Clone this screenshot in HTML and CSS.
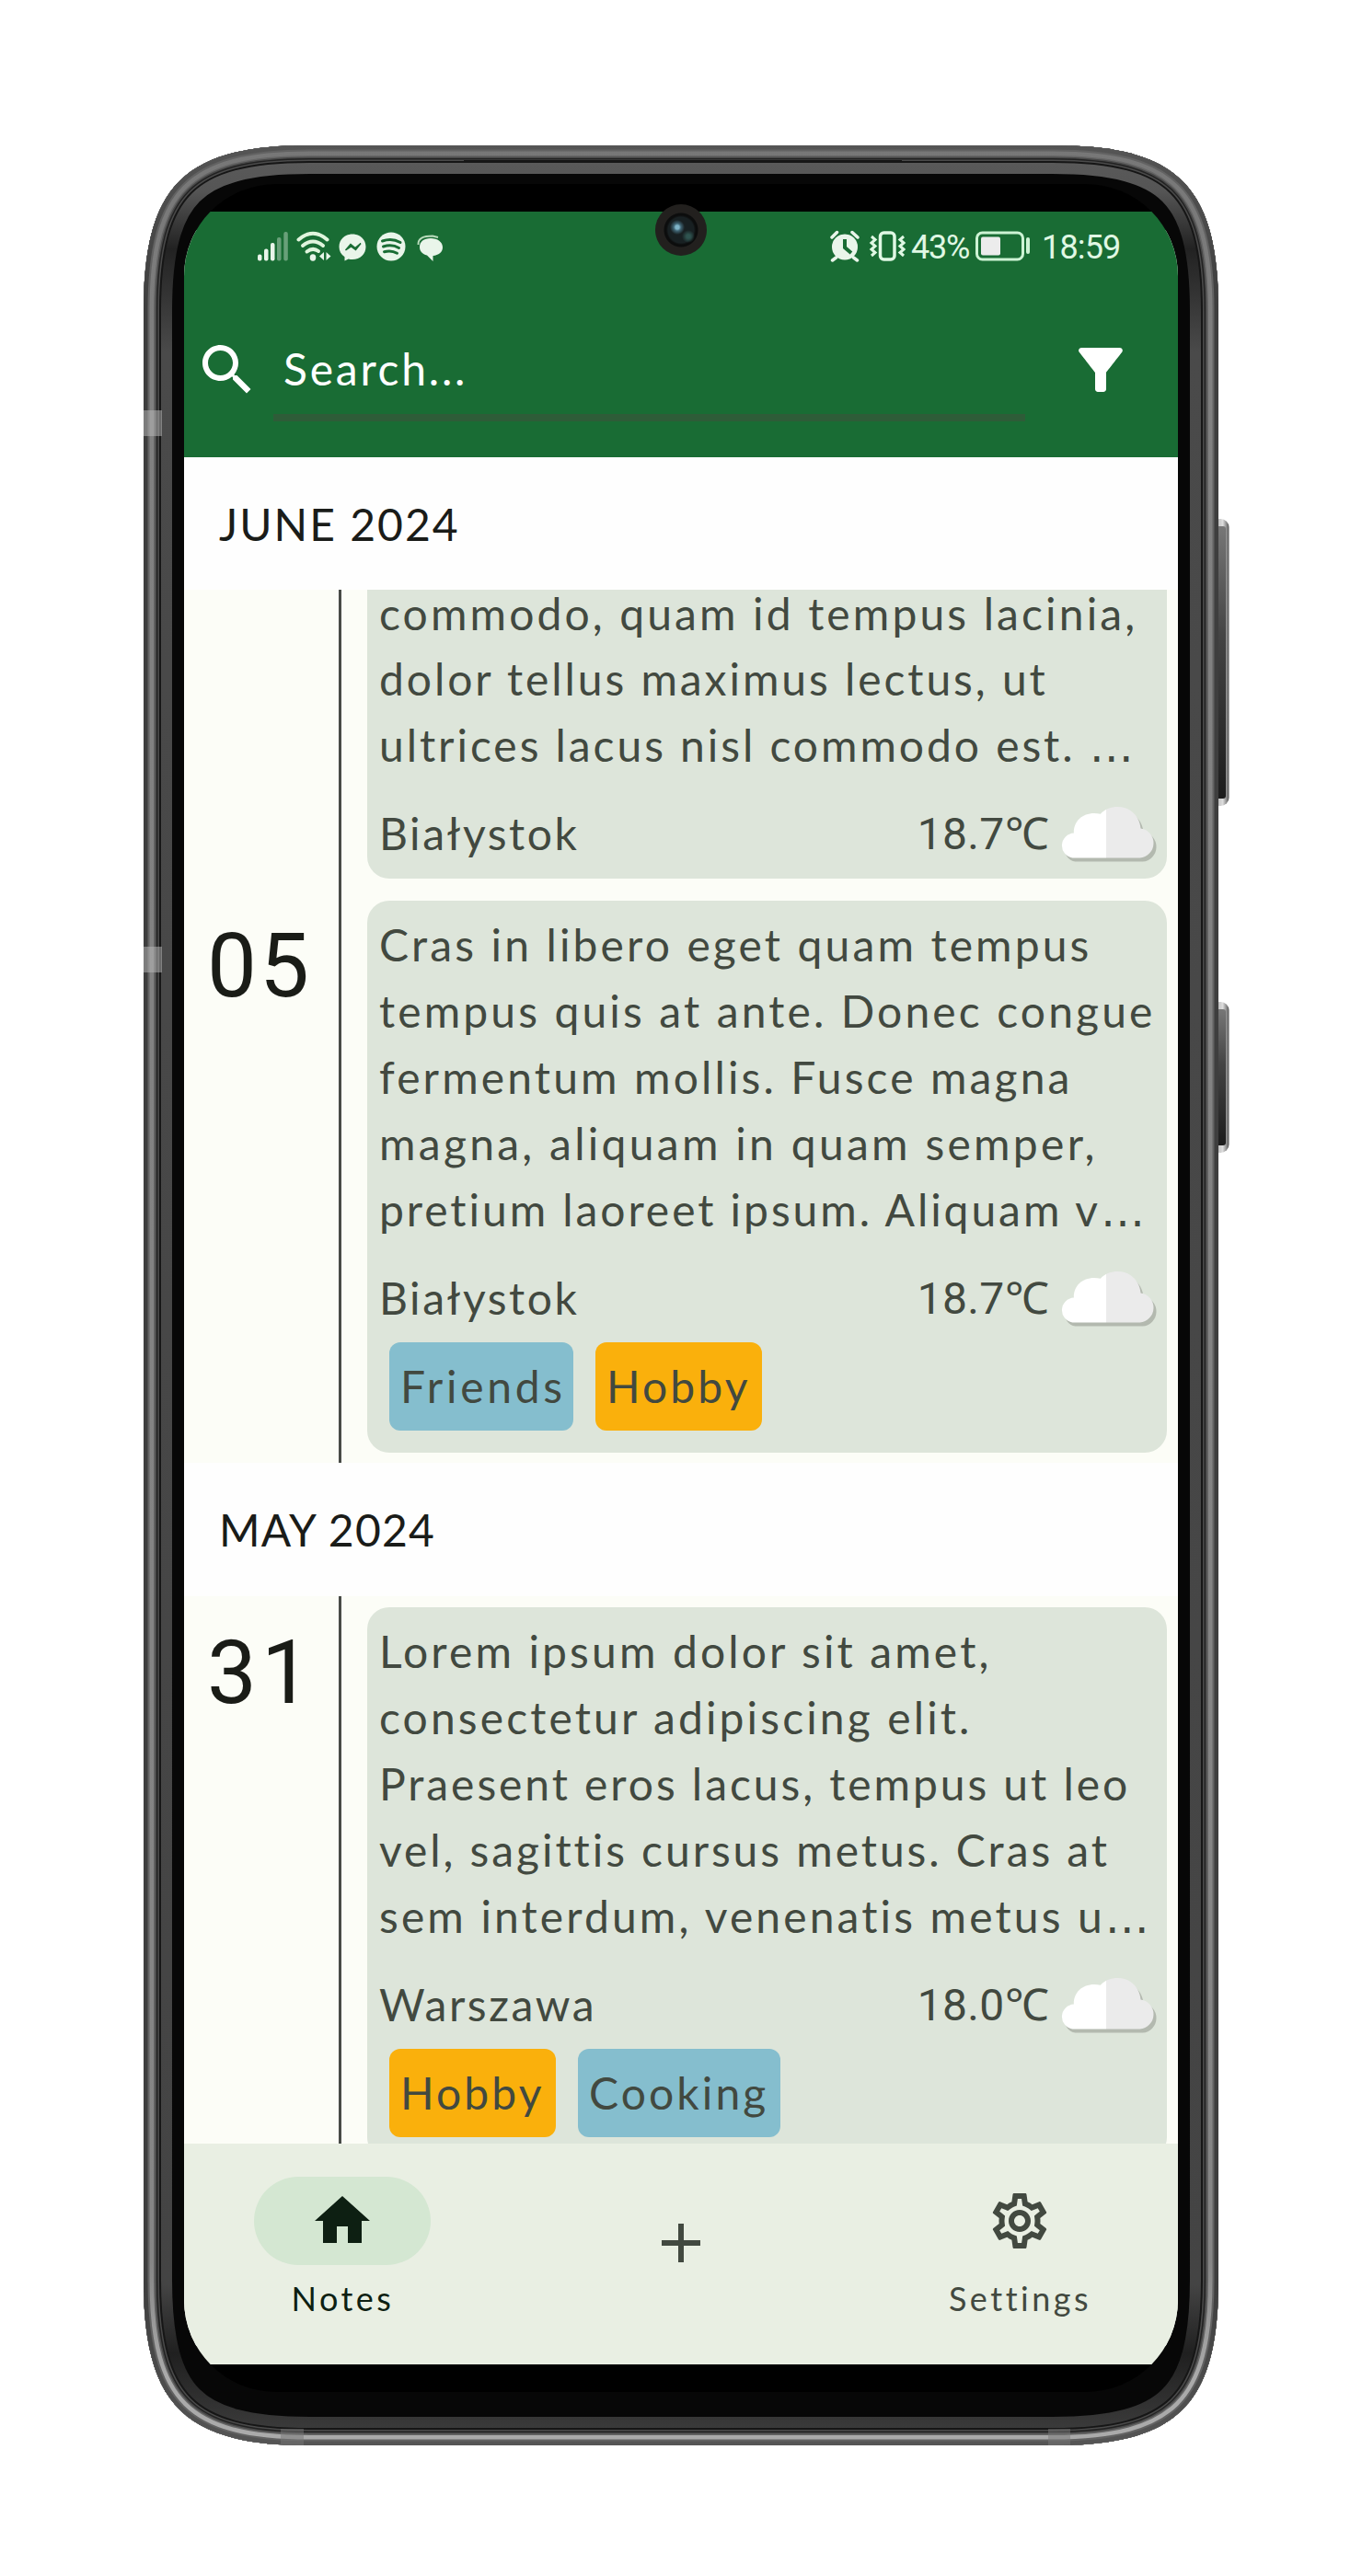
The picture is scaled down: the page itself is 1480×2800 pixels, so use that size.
FILE: index.html
```html
<!DOCTYPE html>
<html lang="en">
<head>
<meta charset="utf-8">
<title>Notes</title>
<link rel="stylesheet" href="styles.css">
</head>
<body>
<svg class="defs" width="0" height="0" aria-hidden="true">
  <defs>
    <linearGradient id="face" x1="0" x2="1" y1="0" y2="0">
      <stop offset="0" stop-color="#fff"/><stop offset=".486" stop-color="#fff"/>
      <stop offset=".486" stop-color="#ebebeb"/><stop offset="1" stop-color="#ebebeb"/>
    </linearGradient>
    <symbol id="cloud" viewBox="0 0 108 60">
      <path transform="translate(3 4)" fill="#b3b9af" d="M14 54.6A13.4 13.4 0 0 1 15.5 28C15 14 27 4 44 7.5C53-2 68-1.5 76 4C83 9 86 15 87 23A15.9 15.9 0 0 1 86 54.6Z"/>
      <path fill="url(#face)" d="M14 54.6A13.4 13.4 0 0 1 15.5 28C15 14 27 4 44 7.5C53-2 68-1.5 76 4C83 9 86 15 87 23A15.9 15.9 0 0 1 86 54.6Z"/>
    </symbol>
  </defs>
</svg>
<div class="device">
  <svg class="frame" viewBox="0 0 1184 2500" width="1184" height="2500" fill="none">
    <defs>
      <path id="body" d="M180 0H988C1124 0 1168 44 1168 180V2320C1168 2456 1124 2500 988 2500H180C44 2500 0 2456 0 2320V180C0 44 44 0 180 0Z"/>
      <clipPath id="inside"><use href="#body"/></clipPath>
      <linearGradient id="edge" x1="0" y1="0" x2="0" y2="1"><stop offset="0" stop-color="#555"/><stop offset=".07" stop-color="#3e3e3e"/><stop offset=".93" stop-color="#3e3e3e"/><stop offset="1" stop-color="#555"/></linearGradient>
      <linearGradient id="shine" x1="0" y1="0" x2="0" y2="1"><stop offset="0" stop-color="#777"/><stop offset=".1" stop-color="#808080"/><stop offset=".92" stop-color="#868686"/><stop offset=".97" stop-color="#aaa"/><stop offset="1" stop-color="#aaa"/></linearGradient>
      <linearGradient id="rim" x1="0" y1="0" x2="0" y2="1"><stop offset="0" stop-color="#5c5c5c"/><stop offset=".02" stop-color="#555"/><stop offset=".045" stop-color="#222"/><stop offset=".09" stop-color="#4a4a4a"/><stop offset=".93" stop-color="#444"/><stop offset=".96" stop-color="#202020"/><stop offset="1" stop-color="#404040"/></linearGradient>
      <linearGradient id="key" x1="0" y1="0" x2="0" y2="1"><stop offset="0" stop-color="#777"/><stop offset=".4" stop-color="#444"/><stop offset="1" stop-color="#1c1c1c"/></linearGradient>
      <linearGradient id="keyrim" x1="0" y1="0" x2="1" y2="0"><stop offset="0" stop-color="#999"/><stop offset=".65" stop-color="#ddd"/><stop offset="1" stop-color="#555"/></linearGradient>
    </defs>
    <rect x="1160" y="406" width="19.5" height="312" rx="9" fill="url(#keyrim)"/>
    <rect x="1160" y="414" width="16" height="296" rx="3" fill="url(#key)"/>
    <rect x="1160" y="931" width="19.5" height="164" rx="9" fill="url(#keyrim)"/>
    <rect x="1160" y="939" width="16" height="148" rx="3" fill="url(#key)"/>
    <g clip-path="url(#inside)">
      <use href="#body" fill="#070707"/>
      <use href="#body" stroke="url(#rim)" stroke-width="62"/>
      <use href="#body" stroke="#161616" stroke-width="38"/>
      <use href="#body" stroke="#4a4a4a" stroke-width="34"/>
      <use href="#body" stroke="#222" stroke-width="31"/>
      <use href="#body" stroke="#484848" stroke-width="28"/>
      <use href="#body" stroke="#666" stroke-width="25"/>
      <use href="#body" stroke="url(#shine)" stroke-width="22"/>
      <use href="#body" stroke="#626262" stroke-width="13"/>
      <use href="#body" stroke="url(#edge)" stroke-width="9"/>
      <path d="M348 17.5H824" stroke="#161616" stroke-width="3"/>
      <g fill="#bbb" fill-opacity=".5">
        <rect x="0" y="288" width="20" height="28"/>
        <rect x="0" y="871" width="20" height="28"/>
      </g>
      <g fill="#777" fill-opacity=".5">
        <rect x="149" y="2482" width="25" height="18"/>
        <rect x="983" y="2482" width="24" height="18"/>
      </g>
    </g>
  </svg>

  <main class="screen">
    <header class="topbar">
      <div class="status">
        <svg class="status-left" width="210" height="36" viewBox="0 0 210 36" fill="#e9f5ea">
          <rect x="0" y="26.500" width="4.500" height="7" rx="2"/><rect x="7" y="20.500" width="4.500" height="13" rx="2"/><rect x="14" y="14" width="4.500" height="19.500" rx="2"/>
          <g opacity=".38"><rect x="21" y="8" width="4.500" height="25.500" rx="2"/><rect x="28.300" y="2" width="4.500" height="31.500" rx="2"/></g>
          <g fill="none" stroke="#e0f5dd" stroke-width="4" stroke-linecap="round"><path d="M44.500 10.500Q60-3 75.500 10.500"/><path d="M49 17Q60 8 71 17"/><path d="M53.500 23.500Q60 18.500 66 23"/></g>
          <ellipse cx="60" cy="30" rx="3.300" ry="3.700"/><path d="M72 24v9l-5-4.500zM74.500 24v9l5-4.500z"/>
          <path d="M103 4.500c8.500 0 14.500 6 14.500 13.800S111.500 32 103 32c-1.500 0-3-.2-4.300-.6L94.500 33.500V29.300C90.500 26.700 88.500 23 88.500 18.300c0-7.800 6-13.800 14.500-13.800z"/>
          <path d="M95.500 22l5.500-6.500 5 4 6-5-5.500 7-5-3.500z" fill="#196c34" stroke="#196c34" stroke-width="1.500"/>
          <circle cx="145" cy="18" r="15.500"/>
          <g fill="none" stroke="#196c34" stroke-width="3" stroke-linecap="round"><path d="M135.500 12Q146 8.500 155 13.500"/><path d="M136.500 18Q146 15 153.500 19.500"/><path d="M137.500 23.700Q145 21.500 151.500 25.200"/></g>
          <path d="M174.500 16C174 9 180 6.500 190 6.500L196 8" fill="none" stroke="#b9dcbc" stroke-width="2"/>
          <path d="M188 9c7.500 0 13 4 13 9.800 0 5.500-4.500 8.800-10.500 9.200v6l-6.500-6.500c-5-1.200-8-4.500-8-9 0-5.700 4.500-9.500 12-9.500z"/>
        </svg>
        <div class="status-right">
          <svg width="84" height="36" viewBox="0 0 84 36" fill="#e9f5ea">
            <circle cx="17" cy="18.500" r="14"/><path d="M3 8l5.500-5.500M31 8L25 2.500M7.500 30l-4 3M26.500 30l4 3" stroke="#e9f5ea" stroke-width="3.500" stroke-linecap="round"/>
            <path d="M17 10v9l7 6" fill="none" stroke="#196c34" stroke-width="4"/>
            <rect x="55.500" y="3" width="15.500" height="29" rx="4" fill="none" stroke="#e0f8e4" stroke-width="3.500"/>
            <path d="M46 7l4 3.500-4 3.500 4 3.500-4 3.500 4 3.500-4 3.500M81 7l-4 3.500 4 3.500-4 3.500 4 3.500-4 3.500 4 3.500" fill="none" stroke="#e0f8e4" stroke-width="3"/>
          </svg>
          <span class="battery-level">43%</span>
          <svg width="61" height="36" viewBox="0 0 61 36"><rect x="2.500" y="3" width="50" height="29" rx="6" fill="none" stroke="#cdf3d4" stroke-width="3"/><rect x="7" y="7.500" width="21" height="20" rx="2" fill="#ececec"/><path d="M58 10v14" stroke="#cdf3d4" stroke-width="4" stroke-linecap="round"/></svg>
          <span class="clock">18:59</span>
        </div>
      </div>
      <div class="search">
        <svg class="icon" viewBox="0 0 24 24"><path d="M15.500 14h-.79l-.28-.27C15.410 12.590 16 11.110 16 9.500 16 5.910 13.090 3 9.500 3S3 5.910 3 9.500 5.910 16 9.500 16c1.610 0 3.090-.59 4.230-1.570l.27.28v.79l5 4.990L20.490 19l-4.990-5zm-6 0C7.010 14 5 11.990 5 9.500S7.010 5 9.500 5 14 7.010 14 9.500 11.990 14 9.500 14z"/></svg>
        <div class="search-field">Search...</div>
        <svg class="icon" viewBox="0 0 24 24"><path d="M4.250 5.610C6.270 8.200 10 13 10 13v6c0 .55.45 1 1 1h2c.55 0 1-.45 1-1v-6s3.720-4.800 5.740-7.390c.51-.66.04-1.610-.79-1.610H5.040c-.83 0-1.300.95-.79 1.610z"/></svg>
      </div>
    </header>

    <h2 class="month june">JUNE 2024</h2>
    <section class="feed">
      <div class="group group-june">
        <div class="dates">
          <span class="date">05</span>
        </div>
        <div class="cards">
          <article class="card card-cut">
            <p class="text"><span class="line line-top">commodo, quam id tempus lacinia,</span><span class="line tight">dolor tellus maximus lectus, ut</span><span class="line tight">ultrices lacus nisl commodo est. <span class="dots">…</span></span></p>
            <div class="meta"><span class="city">Białystok</span><span class="temp">18.7℃</span><svg class="cloud"><use href="#cloud"/></svg></div>
          </article>
          <article class="card">
            <p class="text"><span class="line">Cras in libero eget quam tempus</span><span class="line">tempus quis at ante. Donec congue</span><span class="line">fermentum mollis. Fusce magna</span><span class="line loose">magna, aliquam in quam semper,</span><span class="line tight">pretium laoreet ipsum. Aliquam v<span class="dots">…</span></span></p>
            <div class="meta"><span class="city">Białystok</span><span class="temp">18.7℃</span><svg class="cloud"><use href="#cloud"/></svg></div>
            <div class="tags"><span class="tag blue friends">Friends</span><span class="tag amber hobby">Hobby</span></div>
          </article>
        </div>
      </div>
      <h2 class="month may">MAY 2024</h2>
      <div class="group">
        <div class="dates">
          <span class="date date-31">31</span>
        </div>
        <div class="cards">
          <article class="card">
            <p class="text"><span class="line">Lorem ipsum dolor sit amet,</span><span class="line">consectetur adipiscing elit.</span><span class="line tight">Praesent eros lacus, tempus ut leo</span><span class="line tight">vel, sagittis cursus metus. Cras at</span><span class="line">sem interdum, venenatis metus u<span class="dots">…</span></span></p>
            <div class="meta"><span class="city">Warszawa</span><span class="temp">18.0℃</span><svg class="cloud"><use href="#cloud"/></svg></div>
            <div class="tags"><span class="tag amber hobby">Hobby</span><span class="tag blue cooking">Cooking</span></div>
          </article>
        </div>
      </div>
    </section>

    <nav class="tabs">
      <div class="tab active">
        <span class="pill"><svg class="icon" viewBox="0 0 24 24"><path d="M10 20v-6h4v6h5v-8h3L12 3 2 12h3v8z"/></svg></span>
        <span class="tab-label">Notes</span>
      </div>
      <div class="tab add">
        <svg class="icon" viewBox="0 0 24 24"><path d="M19 13h-6v6h-2v-6H5v-2h6V5h2v6h6z"/></svg>
      </div>
      <div class="tab">
        <span class="pill"><svg class="icon" viewBox="0 0 24 24"><path d="M19.430 12.980c.04-.32.07-.64.07-.98 0-.34-.03-.66-.07-.98l2.110-1.650c.19-.15.24-.42.12-.64l-2-3.460c-.09-.16-.26-.25-.44-.25-.06 0-.12.01-.17.03l-2.490 1c-.52-.4-1.080-.73-1.690-.98l-.38-2.650C14.460 2.180 14.250 2 14 2h-4c-.25 0-.46.18-.49.42l-.38 2.650c-.61.25-1.170.59-1.690.98l-2.490-1c-.06-.02-.12-.03-.18-.03-.17 0-.34.09-.43.25l-2 3.460c-.13.22-.07.49.12.64l2.110 1.650c-.04.32-.07.65-.07.98s.03.66.07.98l-2.110 1.650c-.19.15-.24.42-.12.64l2 3.460c.09.16.26.25.44.25.06 0 .12-.01.17-.03l2.490-1c.52.4 1.080.73 1.690.98l.38 2.650c.03.24.24.42.49.42h4c.25 0 .46-.18.49-.42l.38-2.650c.61-.25 1.170-.59 1.690-.98l2.490 1c.06.02.12.03.18.03.17 0 .34-.09.43-.25l2-3.460c.12-.22.07-.49-.12-.64l-2.110-1.650zm-1.980-1.710c.04.31.05.52.05.73 0 .21-.02.43-.05.73l-.14 1.130.89.7 1.080.84-.7 1.210-1.270-.51-1.040-.42-.9.68c-.43.32-.84.56-1.250.73l-1.060.43-.16 1.130-.2 1.350h-1.400l-.19-1.350-.16-1.130-1.060-.43c-.43-.18-.83-.41-1.230-.71l-.91-.7-1.060.43-1.270.51-.7-1.210 1.080-.84.89-.7-.14-1.130c-.03-.31-.05-.54-.05-.74s.02-.43.05-.73l.14-1.130-.89-.7-1.080-.84.7-1.210 1.270.51 1.040.42.9-.68c.43-.32.84-.56 1.250-.73l1.060-.43.16-1.130.2-1.350h1.390l.19 1.350.16 1.130 1.060.43c.43.18.83.41 1.230.71l.91.7 1.060-.43 1.270-.51.7 1.210-1.070.85-.89.7.14 1.130zM12 8c-2.210 0-4 1.790-4 4s1.790 4 4 4 4-1.790 4-4-1.790-4-4-4zm0 6c-1.100 0-2-.9-2-2s.9-2 2-2 2 .9 2 2-.9 2-2 2z"/></svg></span>
        <span class="tab-label">Settings</span>
      </div>
    </nav>
  </main>
  <span class="camera"></span>
</div>
</body>
</html>
```
FILE: styles.css
```css
* { box-sizing: border-box; }

body {
  margin: 0;
  background: #fff;
  color: #424940;
  font: 48px/72px Lato, "Open Sans", sans-serif;
}

.defs { position: absolute; }

.device {
  position: relative;
  width: 1168px;
  height: 2500px;
  margin: 158px 0 0 156px;
  padding: 42px 44px 58px;
}

.frame {
  position: absolute;
  top: 0;
  left: 0;
}

.screen {
  position: relative;
  display: flex;
  flex-direction: column;
  height: 2400px;
  padding: 30px 0;
  border-radius: 100px;
  overflow: hidden;
  background: linear-gradient(#000 50px, #fcfdf7 50px 2350px, #000 2350px);
}

.camera {
  position: absolute;
  top: 64px;
  left: 556px;
  width: 56px;
  height: 56px;
  border-radius: 50%;
  background:
    radial-gradient(circle at 24px 25px, #7fb4c8 0 2px, #3f6473 4px, transparent 8px),
    radial-gradient(circle at 36px 35px, #2f5450 0 2px, transparent 7px),
    radial-gradient(circle at 50% 50%, #182022 0 14px, #0c0d0d 16px 18px, #22201e 19px);
}

.icon {
  display: block;
  flex: none;
  width: 72px;
  height: 72px;
  fill: currentColor;
}

/* Top bar */

.topbar {
  flex: none;
  height: 267px;
  background: #196c34;
  color: #fff;
}

.status {
  display: flex;
  justify-content: space-between;
  height: 75px;
  padding: 20px 63px 0 80px;
  color: #e0f8e4;
  font: 36px/36px Roboto, sans-serif;
}

.status-right { display: flex; }

.battery-level {
  width: 74px;
  padding: 1px 0 0 5px;
  letter-spacing: -1.2px;
}

.clock {
  width: 97px;
  padding: 1px 0 0 12px;
  letter-spacing: -.85px;
}

.search {
  display: flex;
  align-items: center;
  height: 154px;
  margin-top: 20px;
  padding: 0 48px 0 11px;
}

.search-field {
  flex: none;
  width: 817px;
  height: 138px;
  margin: 0 46px 0 14px;
  padding: 32px 11px 0;
  background: linear-gradient(#2e5c38, #2e5c38) 0 117px / 100% 8px no-repeat;
  letter-spacing: 2.76px;
}

/* Timeline */

.month {
  flex: none;
  height: 144px;
  margin: 0;
  padding: 37px 0 0 38px;
  background: #fefefe;
  color: #1a1c19;
  font-size: 48px;
  font-weight: 400;
  letter-spacing: 2px;
}

.may {
  height: 145px;
  letter-spacing: 1.2px;
}

.feed {
  flex: 1;
  min-height: 0;
  overflow: hidden;
}

.group {
  display: flex;
  background: #fcfdf7;
}

.group-june { height: 949px; }

.dates {
  flex: none;
  width: 171px;
  border-right: 3px solid #484b47;
  padding: 27px 0 0 25px;
}

.group-june .dates { padding-top: 353px; }

.date {
  display: block;
  color: #1a1c17;
  font: 96px/112px Roboto, sans-serif;
  letter-spacing: 3px;
}

.date-31 { letter-spacing: 5px; }

.cards {
  display: flex;
  flex: 1;
  flex-direction: column;
  gap: 24px;
  padding: 12px 12px 0 28px;
}

.group-june .cards { padding-top: 0; }

.card {
  padding: 12px 12px 24px 13px;
  border-radius: 24px;
  background: #dde5da;
}

.card-cut {
  height: 314px;
  padding: 1px 12px 0 13px;
  border-radius: 0 0 24px 24px;
}

.text { margin: 0; }

.line {
  display: block;
  white-space: nowrap;
  letter-spacing: 3.12px;
}

/* the first visible line sits right under the sticky month header */
.line-top {
  margin-bottom: 11px;
  line-height: 49px;
}

.tight { letter-spacing: 2.93px; }
.loose { letter-spacing: 3.28px; }

.dots {
  font-family: "DejaVu Sans", sans-serif;
  letter-spacing: 0;
  line-height: 0;
}

.meta {
  display: flex;
  height: 72px;
  margin-top: 24px;
}

.city {
  flex: 1;
  letter-spacing: 2.55px;
}

.temp {
  margin-right: 11px;
  padding-top: 1px;
  font-family: Roboto, sans-serif;
  letter-spacing: .35px;
}

.cloud {
  width: 110px;
  height: 61px;
  margin: 7px -5px 0 0;
}

.tags {
  display: flex;
  gap: 24px;
  margin: 12px 0 0 11px;
}

.tag {
  height: 96px;
  padding: 12px 0 0 12px;
  border-radius: 12px;
  letter-spacing: 3.1px;
}

.friends { width: 200px; letter-spacing: 3.7px; }
.hobby { width: 181px; }
.cooking { width: 220px; }

.blue { background: #85bece; }
.amber { background: #fab00c; }

/* Bottom navigation */

.tabs {
  display: flex;
  flex: none;
  justify-content: space-between;
  height: 240px;
  padding: 36px 76px 0;
  background: #e9efe3;
}

.tab {
  display: flex;
  flex-direction: column;
  align-items: center;
  width: 192px;
}

.pill {
  display: flex;
  align-items: center;
  justify-content: center;
  width: 192px;
  height: 96px;
  border-radius: 48px;
}

.active { color: #0d1f12; }
.active .pill { background: #d4e7d2; }
.add { padding-top: 36px; }

.tab-label {
  margin-top: 12px;
  padding-left: 1px;
  font-size: 36px;
  line-height: 48px;
  letter-spacing: 3.5px;
}
```
